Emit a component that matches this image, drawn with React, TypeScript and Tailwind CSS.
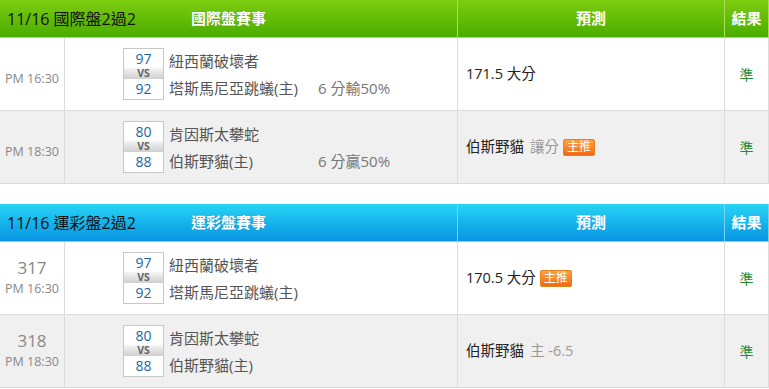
import React from "react";

type Match = {
  no?: string;
  time: string;
  away: string;
  home: string;
  awayScore: string;
  homeScore: string;
  odds?: string;
  pick: string;
  pickNote?: string;
  hot?: boolean;
  result: string;
};

const font = { fontFamily: '"Open Sans", "Noto Sans CJK TC", sans-serif' };

function Badge() {
  return (
    <span className="ml-1 inline-flex h-[17px] items-center rounded-[2px] border border-[#e8801a] bg-gradient-to-b from-[#ffa040] to-[#f06a10] px-[3px] text-[12px] leading-none text-white">
      主推
    </span>
  );
}

function ScoreBox({ top, bottom }: { top: string; bottom: string }) {
  return (
    <div className="flex w-[41px] flex-col border border-[#c8c8c8] bg-white text-center">
      <div className="flex h-[19px] items-center justify-center text-[14px] leading-none text-[#1a66a8]">{top}</div>
      <div className="flex h-[11px] items-center justify-center bg-gradient-to-b from-[#f4f4f4] to-[#cfcfcf] text-[10.5px] font-bold leading-none text-[#666]">
        VS
      </div>
      <div className="flex h-[20px] items-center justify-center text-[14px] leading-none text-[#1a66a8]">{bottom}</div>
    </div>
  );
}

function Row({ m, alt }: { m: Match; alt: boolean }) {
  return (
    <div
      className={`grid h-[73px] grid-cols-[65px_393px_267px_44px] border-b border-[#dcdcdc] ${alt ? "bg-[#f0f0f0]" : "bg-white"}`}
    >
      <div className="flex flex-col items-center justify-center border-r border-[#dcdcdc] text-[#888]">
        {m.no && <div className="text-[17px] leading-[22px]">{m.no}</div>}
        <div className={`text-[12.5px] leading-[20px] ${m.no ? "" : "pt-[10px]"}`}>{m.time}</div>
      </div>
      <div className="flex items-center border-r border-[#dcdcdc] pl-[58px]">
        <ScoreBox top={m.awayScore} bottom={m.homeScore} />
        <div className="ml-[5px] flex h-[51px] w-[149px] flex-col justify-between text-[15px] leading-[24px] text-[#555]">
          <div>{m.away}</div>
          <div>{m.home}</div>
        </div>
        {m.odds && (
          <div className="flex h-[51px] flex-col justify-end text-[15px] leading-[24px] text-[#777]">{m.odds}</div>
        )}
      </div>
      <div className="flex items-center border-r border-[#dcdcdc] pl-[8px] text-[14.5px] text-[#222]">
        <span>{m.pick}</span>
        {m.pickNote && <span className="ml-[6px] text-[#999]">{m.pickNote}</span>}
        {m.hot && <Badge />}
      </div>
      <div className="flex items-center justify-center border-r border-[#dcdcdc] text-[14px] text-[#1f8a3a]">
        {m.result}
      </div>
    </div>
  );
}

function Section({
  title,
  event,
  blue,
  matches,
}: {
  title: string;
  event: string;
  blue?: boolean;
  matches: Match[];
}) {
  const grad = blue
    ? "bg-gradient-to-b from-[#28d4f4] to-[#0894e2] border-[#6fd6f4]"
    : "bg-gradient-to-b from-[#7ccd10] to-[#4aac00] border-[#a8e050]";
  const line = blue ? "border-[#6fd6f4]" : "border-[#a8e050]";
  return (
    <div>
      <div className={`grid h-[38px] grid-cols-[458px_267px_44px] border-b ${grad}`}>
        <div className={`relative flex items-center justify-center border-r ${line}`}>
          <span className="absolute left-[7px] text-[16px] text-[#111]">{title}</span>
          <span className="text-[15px] font-bold text-white [text-shadow:0_0_1px_rgba(0,0,0,0.3)]">{event}</span>
        </div>
        <div className={`flex items-center justify-center border-r text-[15px] font-bold text-white ${line}`}>預測</div>
        <div className={`flex items-center justify-center border-r text-[15px] font-bold text-white ${line}`}>結果</div>
      </div>
      {matches.map((m, i) => (
        <Row key={i} m={m} alt={i % 2 === 1} />
      ))}
    </div>
  );
}

const intl: Match[] = [
  {
    time: "PM 16:30",
    away: "紐西蘭破壞者",
    home: "塔斯馬尼亞跳蟻(主)",
    awayScore: "97",
    homeScore: "92",
    odds: "6 分輸50%",
    pick: "171.5 大分",
    result: "準",
  },
  {
    time: "PM 18:30",
    away: "肯因斯太攀蛇",
    home: "伯斯野貓(主)",
    awayScore: "80",
    homeScore: "88",
    odds: "6 分贏50%",
    pick: "伯斯野貓",
    pickNote: "讓分",
    hot: true,
    result: "準",
  },
];

const lottery: Match[] = [
  {
    no: "317",
    time: "PM 16:30",
    away: "紐西蘭破壞者",
    home: "塔斯馬尼亞跳蟻(主)",
    awayScore: "97",
    homeScore: "92",
    pick: "170.5 大分",
    hot: true,
    result: "準",
  },
  {
    no: "318",
    time: "PM 18:30",
    away: "肯因斯太攀蛇",
    home: "伯斯野貓(主)",
    awayScore: "80",
    homeScore: "88",
    pick: "伯斯野貓",
    pickNote: "主 -6.5",
    result: "準",
  },
];

export default function App() {
  return (
    <div className="w-[769px] bg-white" style={font}>
      <Section title="11/16 國際盤2過2" event="國際盤賽事" matches={intl} />
      <div className="h-[20px]" />
      <Section title="11/16 運彩盤2過2" event="運彩盤賽事" blue matches={lottery} />
    </div>
  );
}
